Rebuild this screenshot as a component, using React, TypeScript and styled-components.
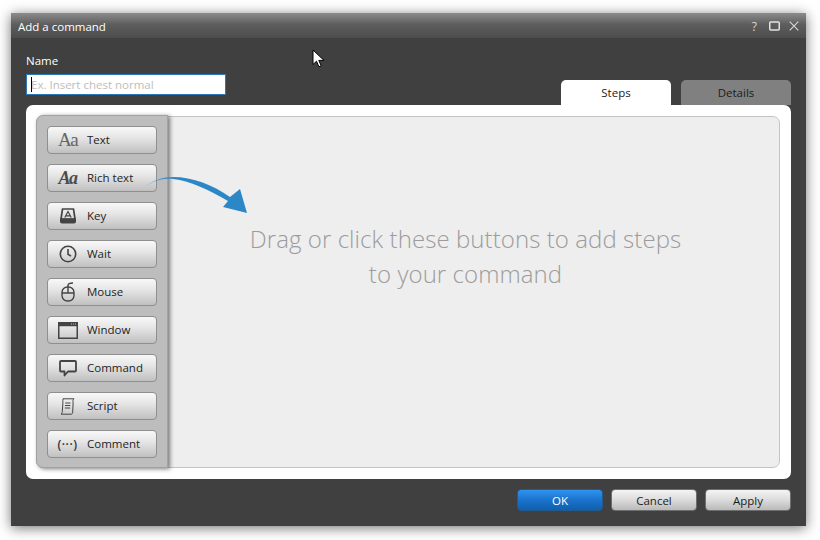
import React from "react";
import styled, { createGlobalStyle } from "styled-components";

const GlobalStyle = createGlobalStyle`
  html, body {
    margin: 0;
    padding: 0;
    background: #fff;
    font-family: "Open Sans", "Liberation Sans", sans-serif;
  }
`;

const Page = styled.div`
  width: 820px;
  height: 540px;
  padding: 13px 14px 14px 11px;
  box-sizing: border-box;
  overflow: hidden;
  position: relative;
`;

const Window = styled.div`
  width: 795px;
  height: 513px;
  background: #404040;
  box-shadow: 0 2px 12px rgba(0, 0, 0, 0.55);
  display: flex;
  flex-direction: column;
`;

const TitleBar = styled.div`
  height: 25px;
  flex: none;
  background: linear-gradient(#8c8c8c, #5e5e5e 45%, #4c4c4c);
  display: flex;
  align-items: center;
  padding: 1px 7px 0;
  box-sizing: border-box;
  color: #fff;
  font-size: 11.5px;
`;

const Title = styled.div`
  flex: 1;
`;

const WinControls = styled.div`
  display: flex;
  align-items: center;
  gap: 9px;
  color: #d8d8d8;
`;

const Help = styled.span`
  font-size: 12px;
  margin-right: 3px;
`;

const Body = styled.div`
  flex: 1;
  padding: 0 15px 15px;
  display: flex;
  flex-direction: column;
`;

const Header = styled.div`
  height: 67px;
  flex: none;
  display: flex;
  justify-content: space-between;
  align-items: flex-end;
`;

const NameField = styled.div`
  display: flex;
  flex-direction: column;
  gap: 5px;
  padding-bottom: 10px;
`;

const Label = styled.label`
  color: #fff;
  font-size: 11.5px;
  line-height: 16px;
`;

const NameInput = styled.div`
  width: 200px;
  height: 21px;
  box-sizing: border-box;
  background: #fff;
  border: 1px solid #2a78b8;
  color: #bdbdbd;
  font-size: 11.5px;
  line-height: 19px;
  padding-left: 4px;
  position: relative;
  &::before {
    content: "";
    position: absolute;
    left: 4px;
    top: 2px;
    width: 1px;
    height: 15px;
    background: #000;
  }
`;

const Tabs = styled.div`
  display: flex;
  gap: 10px;
`;

const Tab = styled.div<{ $active?: boolean }>`
  width: 110px;
  height: 25px;
  border-radius: 5px 5px 0 0;
  background: ${(p) => (p.$active ? "#fff" : "#808080")};
  color: #1c1c1c;
  font-size: 11.5px;
  display: flex;
  align-items: center;
  justify-content: center;
`;

const Panel = styled.div`
  height: 374px;
  flex: none;
  background: #fff;
  border-radius: 7px;
  padding: 11px 11px 11px 10px;
  box-sizing: border-box;
`;

const DropArea = styled.div`
  height: 352px;
  background: #eeeeee;
  border: 1px solid #c4c4c4;
  border-radius: 7px;
  box-sizing: border-box;
  display: flex;
  position: relative;
`;

const Toolbox = styled.div`
  width: 132px;
  flex: none;
  margin: -2px 0 -1px -1px;
  box-sizing: border-box;
  background: #bdbdbd;
  border-radius: 7px 0 0 7px;
  border: 1px solid #a2a2a2;
  box-shadow: 2px 1px 4px rgba(0, 0, 0, 0.5);
  padding: 10px;
  display: flex;
  flex-direction: column;
  gap: 10px;
`;

const ToolButton = styled.div`
  height: 28px;
  flex: none;
  box-sizing: border-box;
  border: 1px solid #8f8f8f;
  border-radius: 4px;
  background: linear-gradient(#f8f8f8, #e6e6e6 40%, #c0c0c0);
  display: flex;
  align-items: center;
  color: #1e1e1e;
  font-size: 11.5px;
  padding-bottom: 2px;
`;

const ToolIcon = styled.span`
  width: 39px;
  flex: none;
  display: flex;
  align-items: center;
  justify-content: center;
  color: #444;
  position: relative;
  top: 1px;
`;

const SerifAa = styled.span<{ $italic?: boolean }>`
  font-family: "Liberation Serif", serif;
  font-size: ${(p) => (p.$italic ? 18 : 19)}px;
  line-height: 18px;
  letter-spacing: -1.5px;
  color: ${(p) => (p.$italic ? "#4c4c4c" : "#666")};
  font-style: ${(p) => (p.$italic ? "italic" : "normal")};
  font-weight: ${(p) => (p.$italic ? 700 : 400)};
`;

const CommentDots = styled.span`
  font-size: 12px;
  font-weight: 600;
  color: #333;
  letter-spacing: 0.5px;
`;

const Hint = styled.div`
  flex: 1;
  padding-right: 16px;
  padding-bottom: 72px;
  display: flex;
  align-items: center;
  justify-content: center;
  text-align: center;
  color: #9c9c9c;
  font-size: 24px;
  font-weight: 300;
  letter-spacing: 0.07px;
  line-height: 35px;
  box-sizing: border-box;
`;

const Arrow = styled.svg`
  position: absolute;
  left: 106px;
  top: 59px;
`;

const Cursor = styled.svg`
  position: absolute;
  left: 312px;
  top: 49px;
`;

const Footer = styled.div`
  flex: 1;
  display: flex;
  justify-content: flex-end;
  align-items: flex-end;
  gap: 8px;
`;

const FooterButton = styled.div<{ $primary?: boolean }>`
  width: 86px;
  height: 22px;
  box-sizing: border-box;
  border-radius: 4px;
  border: 1px solid ${(p) => (p.$primary ? "#235a8c" : "#6e6e6e")};
  background: ${(p) =>
    p.$primary
      ? "linear-gradient(#2f94f0, #1a73cc 50%, #0f5fae)"
      : "linear-gradient(#f4f4f4, #dedede 45%, #bababa)"};
  color: ${(p) => (p.$primary ? "#fff" : "#1c1c1c")};
  font-size: 11.5px;
  display: flex;
  align-items: center;
  justify-content: center;
`;

const KeyIcon = () => (
  <svg width="18" height="16" viewBox="0 0 18 16" fill="none">
    <path d="M3.5 1h11L16 11H2z" stroke="#444" strokeWidth="1.7" strokeLinejoin="round" />
    <path d="M1 10.5h16v3a2 2 0 0 1-2 2H3a2 2 0 0 1-2-2z" fill="#444" />
    <path d="M5.8 9.5L9 3.5l3.2 6M7 7.8h4" stroke="#444" strokeWidth="1.2" />
  </svg>
);

const ClockIcon = () => (
  <svg width="18" height="18" viewBox="0 0 18 18" fill="none" stroke="#444">
    <circle cx="9" cy="9" r="7.7" strokeWidth="1.6" />
    <path d="M9 4v5.2l3 2" strokeWidth="1.6" />
  </svg>
);

const MouseIcon = () => (
  <svg width="14" height="20" viewBox="0 0 14 20" fill="none" stroke="#444" strokeWidth="1.4">
    <rect x="1" y="5" width="12" height="14" rx="5.5" />
    <path d="M1 11h12M7 5v6" />
    <path d="M7 5V3.5C7 2 8.5 1 12 1" />
  </svg>
);

const WindowIcon = () => (
  <svg width="20" height="17" viewBox="0 0 20 17" fill="none">
    <rect x="0.75" y="0.75" width="18.5" height="15.5" stroke="#444" strokeWidth="1.5" />
    <rect x="0.75" y="0.75" width="18.5" height="3.5" fill="#444" />
    <path d="M13 2h5" stroke="#bbb" strokeWidth="1" strokeDasharray="1 1" />
  </svg>
);

const SpeechIcon = () => (
  <svg width="18" height="17" viewBox="0 0 18 17" fill="none">
    <path
      d="M2 1h14a1 1 0 0 1 1 1v8.5a1 1 0 0 1-1 1H9l-3.5 4v-4H2a1 1 0 0 1-1-1V2a1 1 0 0 1 1-1z"
      stroke="#444"
      strokeWidth="1.8"
      strokeLinejoin="round"
    />
  </svg>
);

const ScrollIcon = () => (
  <svg width="15" height="17" viewBox="0 0 15 17" fill="none" stroke="#444" strokeWidth="1">
    <path d="M3 .8h11c-1.2 1-1.2 2-.9 4l-.4 9.5c0 1-.7 1.9-1.7 1.9H1c1-.6 1.2-1.4 1.3-2.6l.6-9C3 3 2.5 2 3 .8z" />
    <path d="M5.2 5h5.3M5 7.5h5.3M4.9 10h5.3" strokeWidth="1.1" />
  </svg>
);

const tools: { label: string; icon: React.ReactNode }[] = [
  { label: "Text", icon: <SerifAa>Aa</SerifAa> },
  { label: "Rich text", icon: <SerifAa $italic>Aa</SerifAa> },
  { label: "Key", icon: <KeyIcon /> },
  { label: "Wait", icon: <ClockIcon /> },
  { label: "Mouse", icon: <MouseIcon /> },
  { label: "Window", icon: <WindowIcon /> },
  { label: "Command", icon: <SpeechIcon /> },
  { label: "Script", icon: <ScrollIcon /> },
  { label: "Comment", icon: <CommentDots>(···)</CommentDots> },
];

const App = () => {
  return (
    <Page>
      <GlobalStyle />
      <Window>
        <TitleBar>
          <Title>Add a command</Title>
          <WinControls>
            <Help>?</Help>
            <svg width="11" height="10" viewBox="0 0 11 10" fill="none" stroke="#e2e2e2">
              <rect x="0.75" y="1" width="9.5" height="8" rx="1" strokeWidth="1.5" />
            </svg>
            <svg width="10" height="10" viewBox="0 0 10 10" fill="none" stroke="#d8d8d8">
              <path d="M.7.7l8.6 8.6M9.3.7L.7 9.3" strokeWidth="1.1" />
            </svg>
          </WinControls>
        </TitleBar>
        <Body>
          <Header>
            <NameField>
              <Label>Name</Label>
              <NameInput>Ex. Insert chest normal</NameInput>
            </NameField>
            <Tabs>
              <Tab $active>Steps</Tab>
              <Tab>Details</Tab>
            </Tabs>
          </Header>
          <Panel>
            <DropArea>
              <Toolbox>
                {tools.map((t) => (
                  <ToolButton key={t.label}>
                    <ToolIcon>{t.icon}</ToolIcon>
                    {t.label}
                  </ToolButton>
                ))}
              </Toolbox>
              <Hint>
                Drag or click these buttons to add steps
                <br />
                to your command
              </Hint>
              <Arrow width="106" height="40" viewBox="0 0 106 40">
                <defs>
                  <linearGradient id="arrowFill" x1="0" x2="0.3" y1="0" y2="0">
                    <stop offset="0" stopColor="#2c87c6" stopOpacity="0.35" />
                    <stop offset="1" stopColor="#2c87c6" />
                  </linearGradient>
                </defs>
                <path
                  d="M0 12C10 4 20 1 30 1c20 0 40 8 57 20l10-8 7 24-24-6 5-6C66 14 48 5 30 3 20 2 10 5 0 12z"
                  fill="url(#arrowFill)"
                />
              </Arrow>
            </DropArea>
          </Panel>
          <Footer>
            <FooterButton $primary>OK</FooterButton>
            <FooterButton>Cancel</FooterButton>
            <FooterButton>Apply</FooterButton>
          </Footer>
        </Body>
      </Window>
      <Cursor width="13" height="19" viewBox="0 0 13 19">
        <path d="M1 1v14.5l3.5-3.3 2.4 5.6 2.3-1-2.4-5.4H12z" fill="#fff" stroke="#000" />
      </Cursor>
    </Page>
  );
};

export default App;
